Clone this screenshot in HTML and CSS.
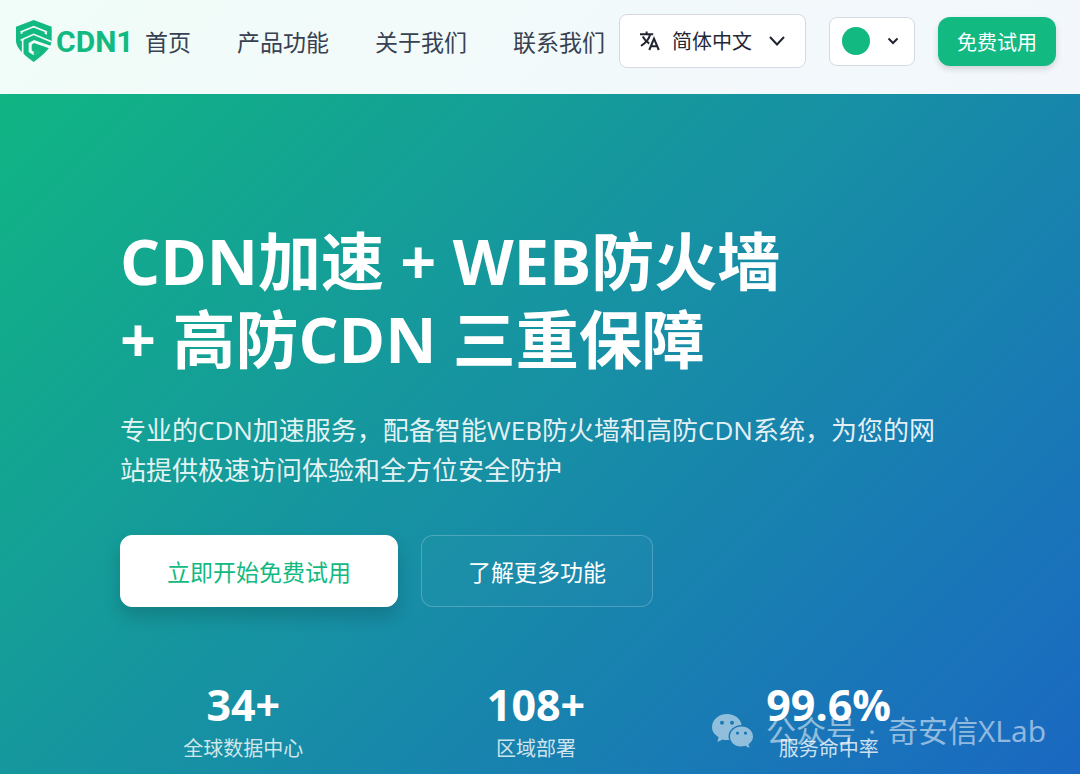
FILE: index.html
```html
<!DOCTYPE html>
<html lang="zh-CN">
<head>
<meta charset="utf-8">
<meta name="viewport" content="width=device-width, initial-scale=1">
<title>CDN1</title>
<link rel="stylesheet" href="styles.css">
</head>
<body>
<header class="header">
  <a class="logo" href="#">
    <svg class="logo-mark" viewBox="0 0 108 126" aria-hidden="true">
      <path class="mark-fill" d="M53 0 107 20V64Q106 88 53 126 1 90 0 64V20Z"/>
      <path class="mark-line" d="M14 36 53 20 93 36M14 61 53 43 108 66M20 106V60"/>
      <path class="mark-gap" d="M14 34V43L20 40V34ZM86 34V41L93 44V34Z"/>
      <path class="mark-gap" d="M108 79 54 60 38 69V96L53 106 70 95V87L54 96 47 91V74L54 69 108 88Z"/>
      <path class="mark-fill" d="M58 84 70 77 84 83 74 93 53 106V97L67 88Z"/>
    </svg>
    <span>CDN1</span>
  </a>
  <nav class="nav">
    <a href="#">首页</a>
    <a href="#">产品功能</a>
    <a href="#">关于我们</a>
    <a href="#">联系我们</a>
  </nav>
  <div class="actions">
    <label class="language">
      <svg class="translate-icon" viewBox="0 0 20 20" aria-hidden="true"><path d="M0 3.3H13.2M6.6 .6V3.3M2.7 5.6Q5.5 10.5 9.2 12.5M10.2 3.3Q8.5 10.5 1 14.8M9.3 19 14 7.6 18.8 19M11 15.2H17.2"/></svg>
      <select aria-label="语言"><option>简体中文</option><option>English</option></select>
      <svg class="chevron" viewBox="0 0 16 10" aria-hidden="true"><path d="M1 1 8 8.5 15 1"/></svg>
    </label>
    <button class="theme" type="button" aria-label="主题颜色">
      <span class="swatch"></span>
      <svg class="chevron-small" viewBox="0 0 12 8" aria-hidden="true"><path d="M1.5 1.5 6 6 10.5 1.5"/></svg>
    </button>
    <button class="trial" type="button">免费试用</button>
  </div>
</header>
<main class="hero">
  <div class="content">
    <h1>CDN加速 + WEB防火墙<br>+ 高防CDN 三重保障</h1>
    <p class="lead">专业的CDN加速服务，配备智能WEB防火墙和高防CDN系统，为您的网站提供极速访问体验和全方位安全防护</p>
    <div class="buttons">
      <button class="primary" type="button">立即开始免费试用</button>
      <button class="secondary" type="button">了解更多功能</button>
    </div>
    <dl class="stats">
      <div><dd>34+</dd><dt>全球数据中心</dt></div>
      <div><dd>108+</dd><dt>区域部署</dt></div>
      <div><dd>99.6%</dd><dt>服务命中率</dt></div>
    </dl>
  </div>
  <div class="watermark">
    <svg viewBox="0 0 42 34" aria-hidden="true">
      <path fill-rule="evenodd" d="M15 0C23 0 29 5 29.500 11 22 11.500 16.500 16 16.500 22.500 16.500 24 17 25 17.300 26 15 26.300 12 26 10.500 25.400L5.500 28 6.500 23C2.500 20.500 0 17.500 0 13.200 0 6 6.500 0 15 0ZM10 6.800a2 2 0 1 0 0 4 2 2 0 1 0 0-4ZM20 6.800a2 2 0 1 0 0 4 2 2 0 1 0 0-4Z"/>
      <path fill-rule="evenodd" d="M29.500 12.500C36 12.500 41 17 41 22.500 41 26 39 28.500 36.500 30.200L37.500 34 33.300 31.800C24.500 34.500 18 29 18 22.500 18 17 23 12.500 29.500 12.500ZM25.500 17.500a1.600 1.600 0 1 0 0 3.200 1.600 1.600 0 1 0 0-3.200ZM33.500 17.500a1.600 1.600 0 1 0 0 3.200 1.600 1.600 0 1 0 0-3.200Z"/>
    </svg>
    <span>公众号</span>
    <span>·</span>
    <span>奇安信XLab</span>
  </div>
</main>
</body>
</html>
```

FILE: styles.css
```css
* {
  box-sizing: border-box;
}

body {
  margin: 0;
  min-height: 100vh;
  display: flex;
  flex-direction: column;
  font-family: "Open Sans", "Noto Sans CJK SC", sans-serif;
  color: #374151;
}

button,
select {
  font: inherit;
  color: inherit;
  cursor: pointer;
}

a {
  color: inherit;
  text-decoration: none;
}

h1,
p,
dl,
dd {
  margin: 0;
}

svg {
  display: block;
  flex: none;
}

.header {
  display: flex;
  align-items: flex-start;
  height: 94px;
  padding: 14px 24px 0 16px;
  background: linear-gradient(135deg, #f0fdf8 0%, #f2fafa 40%, #f3f7fc 100%);
}

.logo {
  display: flex;
  align-items: center;
  gap: 4px;
  width: 129px;
  height: 54px;
  color: #12b981;
  font: 700 30px Roboto, sans-serif;
}

.logo-mark {
  width: 36px;
  height: 42px;
}

.mark-fill {
  fill: #12b981;
}

.mark-line {
  fill: none;
  stroke: #f1fcf8;
  stroke-width: 5;
}

.mark-gap {
  fill: #f1fcf8;
}

.nav {
  display: flex;
  gap: 46px;
  height: 54px;
  align-items: center;
  font-size: 23px;
  white-space: nowrap;
}

.actions {
  display: flex;
  align-items: center;
  gap: 23px;
  margin-left: auto;
}

.language {
  display: flex;
  align-items: center;
  width: 187px;
  height: 54px;
  padding: 0 20px;
  border: 1px solid #d5dae1;
  border-radius: 8px;
  background: #fff;
  color: #1f2937;
}

.language select {
  appearance: none;
  border: 0;
  background: none;
  padding: 0;
  margin-left: 12px;
  width: 84px;
  font-size: 20px;
}

.translate-icon {
  width: 20px;
  height: 20px;
}

.translate-icon path,
.chevron path,
.chevron-small path {
  fill: none;
  stroke: #1f2430;
  stroke-width: 2;
}

.chevron {
  width: 16px;
  height: 10px;
  margin-left: auto;
  pointer-events: none;
}

.theme {
  display: flex;
  align-items: center;
  justify-content: space-between;
  width: 86px;
  height: 49px;
  padding: 0 15px 0 12px;
  border: 1px solid #d5dae1;
  border-radius: 8px;
  background: #fff;
}

.swatch {
  width: 28px;
  height: 28px;
  border-radius: 50%;
  background: #12b981;
}

.chevron-small {
  width: 12px;
  height: 8px;
}

.trial {
  width: 118px;
  height: 49px;
  padding: 0;
  border: 0;
  border-radius: 12px;
  background: #12b981;
  color: #fff;
  font-size: 20px;
  box-shadow: 0 3px 6px rgb(0 0 0 / 15%);
}

.hero {
  position: relative;
  flex: 1;
  padding: 128px 128px 8px 120px;
  background: linear-gradient(135deg, #10b583 0%, #178fa5 50%, #1a68c2 100%);
  color: #fff;
}

h1 {
  font-size: 63px;
  font-weight: 700;
  line-height: 78px;
}

.lead {
  margin-top: 32px;
  font-size: 26px;
  line-height: 40px;
  color: rgb(255 255 255 / 90%);
}

.buttons {
  display: flex;
  gap: 23px;
  margin-top: 45px;
}

.primary,
.secondary {
  height: 72px;
  padding: 0 46px;
  border: 1px solid #fff;
  border-radius: 12px;
  font-size: 23px;
}

.primary {
  background: #fff;
  color: #12b981;
  box-shadow: 0 10px 18px rgb(0 0 0 / 16%);
}

.secondary {
  background: rgb(255 255 255 / 2%);
  border-color: rgb(255 255 255 / 22%);
}

.stats {
  display: grid;
  grid-template-columns: repeat(3, 1fr);
  gap: 46px;
  margin-top: 74px;
  text-align: center;
}

.stats > div {
  display: flex;
  flex-direction: column;
}

.stats dd {
  font-size: 43px;
  font-weight: 700;
  line-height: 48px;
}

.stats dt {
  margin-top: 6px;
  font-size: 20px;
  line-height: 28px;
  color: rgb(255 255 255 / 80%);
}

.watermark {
  position: absolute;
  right: 34px;
  bottom: 22px;
  display: flex;
  align-items: center;
  gap: 12px;
  opacity: 0.52;
  font: 400 30px/42px "Open Sans", "Noto Sans CJK SC", sans-serif;
  white-space: nowrap;
  pointer-events: none;
}

.watermark svg {
  width: 42px;
  height: 34px;
  fill: #fff;
}
```
